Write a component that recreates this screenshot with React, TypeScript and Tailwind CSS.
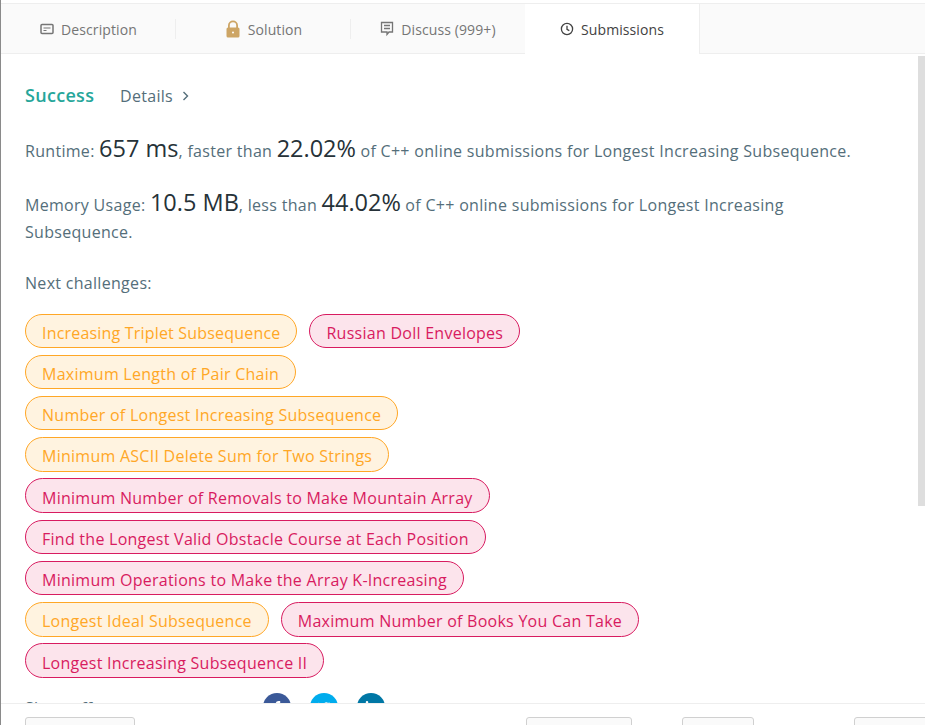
import { FaFacebookF, FaLinkedinIn, FaTwitter } from "react-icons/fa";

const orange = "border-[#ffa726] bg-[#fff3e0] text-[#ffa726]";
const pink = "border-[#d81b60] bg-[#fce4ec] text-[#d81b60]";

const rows = [
  [
    { name: "Increasing Triplet Subsequence", hard: false, tight: true },
    { name: "Russian Doll Envelopes", hard: true },
  ],
  [{ name: "Maximum Length of Pair Chain", hard: false }],
  [{ name: "Number of Longest Increasing Subsequence", hard: false }],
  [{ name: "Minimum ASCII Delete Sum for Two Strings", hard: false }],
  [{ name: "Minimum Number of Removals to Make Mountain Array", hard: true }],
  [{ name: "Find the Longest Valid Obstacle Course at Each Position", hard: true }],
  [{ name: "Minimum Operations to Make the Array K-Increasing", hard: true }],
  [
    { name: "Longest Ideal Subsequence", hard: false },
    { name: "Maximum Number of Books You Can Take", hard: true },
  ],
  [{ name: "Longest Increasing Subsequence II", hard: true }],
];

function Tab({ label, icon, active, divider, width }: { label: string; icon: React.ReactNode; active?: boolean; divider?: boolean; width: string }) {
  return (
    <div
      className={`${width} flex items-center justify-center gap-[7px] h-[50px] ${
        active ? "bg-white text-[#424242] border-r border-[#eeeeee]" : "text-[#757575]"
      } ${divider ? "relative" : ""}`}
    >
      {icon}
      <span>{label}</span>
      {divider && <span className="absolute right-0 top-[15px] h-[20px] w-px bg-[#eeeeee]" />}
    </div>
  );
}

function Num({ children }: { children: React.ReactNode }) {
  return <span className="text-[23.5px] tracking-normal text-[#263238]">{children}</span>;
}

export default function App() {
  return (
    <div className="w-[925px] h-[725px] overflow-hidden flex flex-col bg-white border-l border-[#8a8a8a] font-['Open_Sans',sans-serif] text-[#546e7a] tracking-[0.3px]">
      <div className="h-[4px] border-b border-[#eeeeee] shrink-0" />
      <div className="flex h-[50px] shrink-0 bg-[#fafafa] border-b border-[#eeeeee] text-[14px] tracking-[0.1px]">
        <Tab
          width="w-[175px]"
          divider
          label="Description"
          icon={
            <svg width="14" height="14" viewBox="0 0 14 14" fill="none" stroke="#757575" strokeWidth="1.5">
              <rect x="1" y="2.5" width="12" height="9" rx="1" />
              <path d="M3.5 6h7M3.5 8.5h3" strokeWidth="1.2" />
            </svg>
          }
        />
        <Tab
          width="w-[175px]"
          divider
          label="Solution"
          icon={
            <svg width="16" height="18" viewBox="0 0 16 18" fill="#cda565">
              <path d="M3 8V5.5a5 5 0 0 1 10 0V8h-1.8V5.5a3.2 3.2 0 0 0-6.4 0V8z" />
              <rect x="1.5" y="7.5" width="13" height="10" rx="1.5" />
              <circle cx="8" cy="12.5" r="1" fill="#fff" />
            </svg>
          }
        />
        <Tab
          width="w-[174px]"
          label="Discuss (999+)"
          icon={
            <svg width="14" height="16" viewBox="0 0 14 16" fill="none" stroke="#757575" strokeWidth="1.3">
              <path d="M1.5 1.5h11v9.5H9l-2 2.5V11H1.5z" />
              <path d="M4 4.5h6M4 7.5h6" />
            </svg>
          }
        />
        <Tab
          width="w-[175px]"
          active
          label="Submissions"
          icon={
            <svg width="14" height="14" viewBox="0 0 14 14" fill="none" stroke="#424242" strokeWidth="1.3">
              <circle cx="7" cy="7" r="5.6" />
              <path d="M7 3.8V7.4l2.3 1.2" />
            </svg>
          }
        />
      </div>

      <div className="relative flex-1 min-h-0 overflow-hidden px-6 pt-[28px]">
        <div className="absolute right-0 top-[2px] h-[450px] w-[7px] bg-[#dedede]" />
        <div className="flex items-center h-[26px] text-[16px]">
          <span className="text-[18px] font-semibold text-[#26a69a] w-[95px]">Success</span>
          <span className="pt-[1px]">Details</span>
          <svg className="ml-[9px] mt-[1px]" width="7" height="10" viewBox="0 0 7 10" fill="none" stroke="#546e7a" strokeWidth="1.4">
            <path d="M1.5 1l4 4-4 4" />
          </svg>
        </div>

        <p className="mt-[25px] h-[32px] flex items-center text-[16px] whitespace-nowrap">
          <span>
            Runtime: <Num>657 ms</Num>, faster than <Num>22.02%</Num> of C++ online submissions for Longest Increasing Subsequence.
          </span>
        </p>
        <p className="mt-[24px] w-[840px] text-[16px] leading-[27px]">
          Memory Usage: <Num>10.5 MB</Num>, less than <Num>44.02%</Num> of C++ online submissions for Longest Increasing Subsequence.
        </p>
        <p className="mt-[25px] text-[16px] leading-[24px]">Next challenges:</p>

        <div className="mt-[18.5px] flex flex-col gap-[6.85px]">
          {rows.map((row, i) => (
            <div key={i} className="flex gap-[12px]">
              {row.map((c) => (
                <a
                  key={c.name}
                  className={`h-[34.4px] px-4 pt-[4px] flex items-center rounded-[18px] border text-[16px] whitespace-nowrap ${
                    c.tight ? "tracking-[0.19px]" : "tracking-[0.26px]"
                  } ${c.hard ? pink : orange}`}
                >
                  {c.name}
                </a>
              ))}
            </div>
          ))}
        </div>

        <div className="mt-[15.5px] flex items-start">
          <span className="w-[237.5px] pt-[3px] text-[16px]">Show off your acceptance:</span>
          <div className="flex gap-[19px]">
            <span className="h-[28px] w-[28px] rounded-full bg-[#3b5998] flex items-center justify-center text-white text-[12px]">
              <FaFacebookF />
            </span>
            <span className="h-[28px] w-[28px] rounded-full bg-[#00aced] flex items-center justify-center text-white text-[12px]">
              <FaTwitter />
            </span>
            <span className="h-[28px] w-[28px] rounded-full bg-[#0077a5] flex items-center justify-center text-white text-[12px]">
              <FaLinkedinIn />
            </span>
          </div>
        </div>
      </div>

      <div className="h-[22px] shrink-0 relative z-10 bg-white border-t border-[#eeeeee] overflow-hidden flex pt-[13px] pl-6">
        <div className="w-[110px] h-[20px] shrink-0 rounded-[3px] border border-[#d0d0d0] bg-[#fafafa]" />
        <div className="ml-[391px] w-[106px] h-[20px] shrink-0 rounded-[3px] border border-[#d0d0d0] bg-[#fafafa]" />
        <div className="ml-[50px] w-[72px] h-[20px] shrink-0 rounded-[3px] border border-[#d0d0d0] bg-[#fafafa]" />
        <div className="ml-[100px] w-[80px] h-[20px] shrink-0 rounded-[3px] border border-[#d0d0d0] bg-[#fafafa]" />
      </div>
    </div>
  );
}
